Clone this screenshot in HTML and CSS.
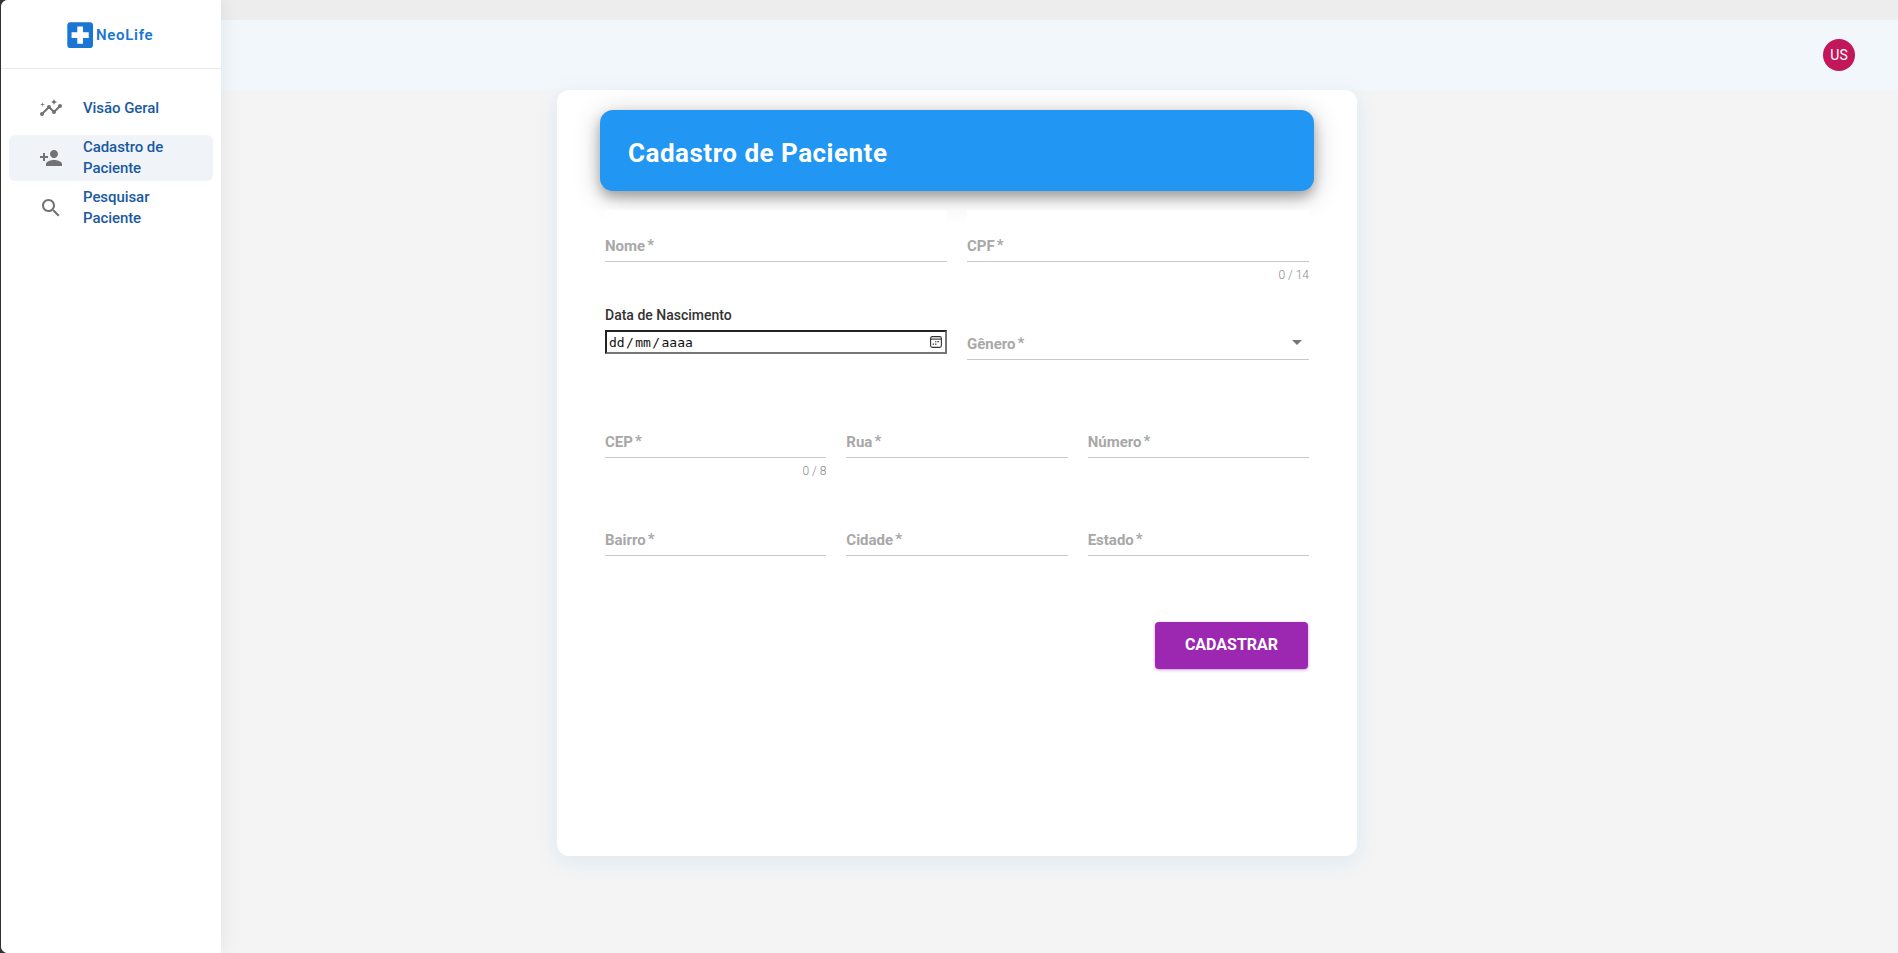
FILE: index.html
```html
<!DOCTYPE html>
<html lang="pt-BR">
<head>
<meta charset="utf-8">
<title>NeoLife</title>
<link rel="stylesheet" href="styles.css">
</head>
<body>
<div class="app">
  <aside class="sidebar">
    <div class="brand">
      <svg class="brand-icon" viewBox="0 0 24 24"><path d="M19 3H5c-1.1 0-1.99.9-1.99 2L3 19c0 1.1.9 2 2 2h14c1.1 0 2-.9 2-2V5c0-1.1-.9-2-2-2zm-1 11h-4v4h-4v-4H6v-4h4V6h4v4h4v4z"/></svg>
      <span class="brand-name">NeoLife</span>
    </div>
    <nav class="menu">
      <a class="item">
        <svg class="icon" viewBox="0 0 24 24"><path d="M21 8c-1.45 0-2.26 1.44-1.93 2.51l-3.55 3.56c-.3-.09-.74-.09-1.04 0l-2.55-2.55C12.27 10.45 11.46 9 10 9c-1.45 0-2.27 1.44-1.93 2.52l-4.56 4.55C2.44 15.74 1 16.55 1 18c0 1.1.9 2 2 2 1.45 0 2.26-1.44 1.93-2.51l4.55-4.56c.3.09.74.09 1.04 0l2.55 2.55C12.73 16.55 13.54 18 15 18c1.45 0 2.27-1.44 1.93-2.52l3.56-3.55c1.07.33 2.51-.48 2.51-1.93 0-1.1-.9-2-2-2z"/><path d="m15 9 .94-2.07L18 6l-2.06-.93L15 3l-.92 2.07L12 6l2.08.93zM3.5 11 4 9l2-.5L4 8l-.5-2L3 8l-2 .5L3 9z"/></svg>
        <span>Visão Geral</span>
      </a>
      <a class="item active">
        <svg class="icon" viewBox="0 0 24 24"><path d="M15 12c2.21 0 4-1.79 4-4s-1.79-4-4-4-4 1.79-4 4 1.79 4 4 4zm-9-2V7H4v3H1v2h3v3h2v-3h3v-2H6zm9 4c-2.67 0-8 1.34-8 4v2h16v-2c0-2.66-5.33-4-8-4z"/></svg>
        <span>Cadastro de<br>Paciente</span>
      </a>
      <a class="item">
        <svg class="icon" viewBox="0 0 24 24"><path d="M15.5 14h-.79l-.28-.27C15.41 12.59 16 11.11 16 9.5 16 5.91 13.09 3 9.5 3S3 5.91 3 9.5 5.91 16 9.5 16c1.61 0 3.09-.59 4.23-1.57l.27.28v.79l5 4.99L20.49 19l-4.99-5zm-6 0C7.01 14 5 11.99 5 9.5S7.01 5 9.5 5 14 7.01 14 9.5 11.99 14 9.5 14z"/></svg>
        <span>Pesquisar<br>Paciente</span>
      </a>
    </nav>
  </aside>
  <div class="page">
    <header class="topbar"><div class="avatar">US</div></header>
    <main class="card">
      <h1 class="banner">Cadastro de Paciente</h1>
      <form class="form">
        <div class="row two">
          <div class="field"><div class="control">Nome<sup>*</sup></div></div>
          <div class="field"><div class="control">CPF<sup>*</sup></div><div class="counter">0 / 14</div></div>
        </div>
        <div class="row two">
          <div class="field">
            <div class="date-label">Data de Nascimento</div>
            <div class="date">
              <span>dd</span><span class="slash">/</span><span>mm</span><span class="slash">/</span><span>aaaa</span>
              <svg class="calendar" viewBox="0 0 12 12"><rect x=".6" y=".6" width="10.8" height="10.8" rx="1.8"/><path d="M.6 3.1h10.8"/><path class="dots" d="M5.1 5.7h1.3M7.2 5.7h2M2.7 8.1h1.3M5.1 8.1h1.3"/></svg>
            </div>
          </div>
          <div class="field"><div class="control">Gênero<sup>*</sup><svg class="arrow" viewBox="0 0 10 5"><path d="M0 0h10L5 5z"/></svg></div></div>
        </div>
        <div class="row three">
          <div class="field"><div class="control">CEP<sup>*</sup></div><div class="counter">0 / 8</div></div>
          <div class="field"><div class="control">Rua<sup>*</sup></div></div>
          <div class="field"><div class="control">Número<sup>*</sup></div></div>
        </div>
        <div class="row three">
          <div class="field"><div class="control">Bairro<sup>*</sup></div></div>
          <div class="field"><div class="control">Cidade<sup>*</sup></div></div>
          <div class="field"><div class="control">Estado<sup>*</sup></div></div>
        </div>
        <button class="submit" type="button">CADASTRAR</button>
      </form>
    </main>
  </div>
</div>
</body>
</html>
```
FILE: styles.css
```css
* { box-sizing: border-box; }
body { margin: 0; background: #333; font-family: Roboto, "Liberation Sans", sans-serif; }
.app { display: flex; height: 953px; margin-left: 1px; background: #f4f4f4; border-radius: 7px 0 0 7px; overflow: hidden; }

.sidebar { width: 219.5px; flex: none; background: #fff; box-shadow: 0 0 20px rgba(0, 0, 0, .08); z-index: 1; }
.brand { height: 69px; padding: 0 0 9px 61.7px; display: flex; align-items: center; border-bottom: 1px solid #e8e8e8; }
.brand-icon { width: 34.3px; height: 34.3px; margin-top: 12px; fill: #1976d2; flex: none; }
.brand-name { font-size: 15px; font-weight: 600; letter-spacing: .7px; color: #1976d2; margin: 10px 0 0 -1px; }
.menu { display: flex; flex-direction: column; gap: 4px; padding: 16px 8px; }
.item { height: 46px; border-radius: 6px; display: flex; align-items: center; padding-left: 30px; font-size: 15px; line-height: 21px; font-weight: 500; letter-spacing: -.07px; color: #1b5a9f; }
.item.active { background: #f0f4f9; }
.icon { width: 24px; height: 24px; margin-right: 20px; fill: #727272; flex: none; }

.page { flex: 1; border-top: 20px solid #ededed; }
.topbar { height: 70px; background: #f2f7fb; display: flex; justify-content: flex-end; padding: 19px 43px 0 0; }
.avatar { width: 32px; height: 32px; border-radius: 50%; background: #c2185b; color: #fff; font-size: 14px; line-height: 32px; text-align: center; }

.card { width: 800px; height: 766px; margin-left: 336.5px; padding: 20px 43px; background: #fff; border-radius: 12px; box-shadow: 0 5px 22px rgba(33, 150, 225, .11); }
.banner { margin: 0 0 19px; height: 81px; padding: 4px 28px 0; border-radius: 13px; background: #2196f3; color: #fff; font-size: 26px; line-height: 78px; font-weight: 700; letter-spacing: .5px; box-shadow: 0 6px 12px rgba(0, 0, 0, .26), 0 5px 27px rgba(0, 0, 0, .23); }
.form { padding: 0 5px; display: flex; flex-direction: column; }
.row { display: grid; column-gap: 20px; height: 98px; }
.two { grid-template-columns: 1fr 1fr; }
.three { grid-template-columns: 1fr 1fr 1fr; }
.field { background: #fff; }
.control { height: 52px; padding-top: 26px; border-bottom: 1px solid #c9c9c9; color: #a8a8a8; font-size: 15px; line-height: 20px; font-weight: 700; display: flex; }
.control sup { font-size: 15px; line-height: 18px; margin-left: 2px; vertical-align: baseline; }
.counter { text-align: right; color: #888; font-size: 12px; font-weight: 300; line-height: 14px; margin-top: 6px; }
.arrow { width: 10px; height: 5px; margin: 6px 7px 0 auto; fill: #757575; }
.date-label { font-size: 14px; line-height: 22px; font-weight: 500; color: #333; margin-top: -4px; }
.date { height: 24px; margin-top: 4px; border: 2px solid; border-color: #222 #767676 #767676 #222; padding: 0 3px 0 2px; display: flex; align-items: center; font-family: "DejaVu Sans Mono", monospace; font-size: 13px; color: #111; }
.slash { padding: 0 1.4px; }
.calendar { width: 12px; height: 12px; margin: -1px 0 0 auto; fill: none; stroke: #333; stroke-width: 1.1; }
.submit { align-self: flex-end; width: 153px; height: 47px; margin: 20px 1px 0 0; padding: 0 0 2px; border: 0; border-radius: 4px; background: #9c27b0; color: #fff; font: 700 16px Roboto, sans-serif; box-shadow: 0 1px 3px rgba(156, 39, 176, .5); }
```
